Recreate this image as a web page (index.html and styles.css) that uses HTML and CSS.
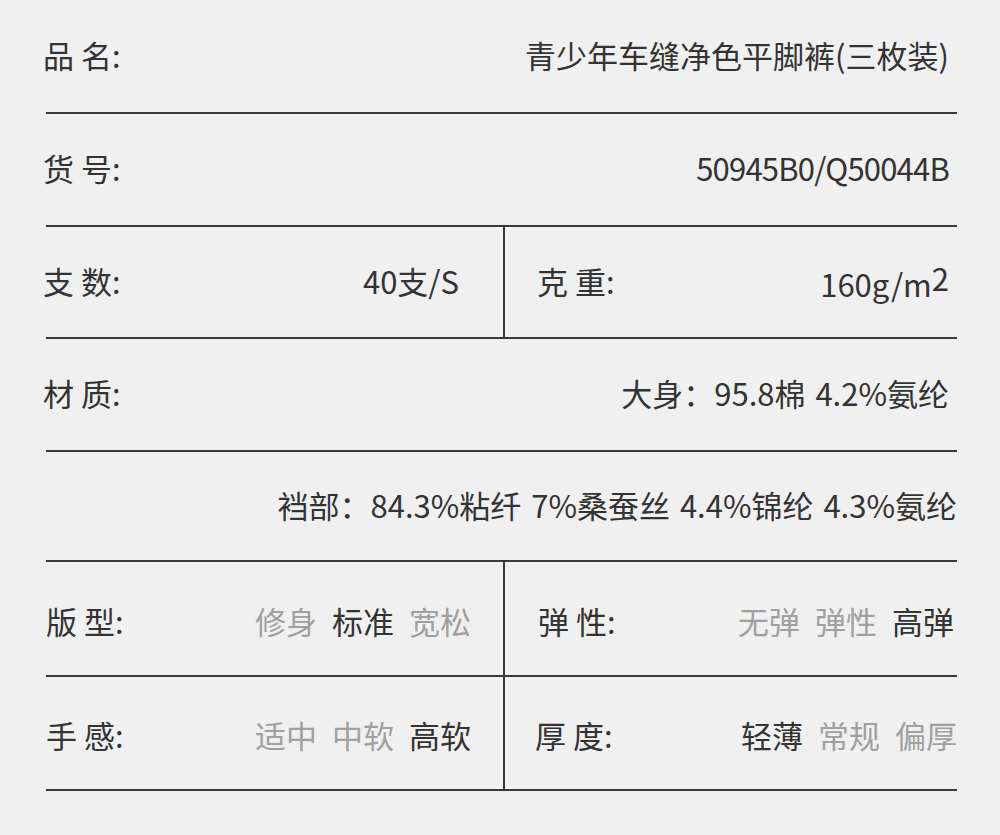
FILE: index.html
```html
<!DOCTYPE html>
<html lang="zh-CN">
<head>
<meta charset="utf-8">
<title>商品参数</title>
<link rel="stylesheet" href="styles.css">
</head>
<body>
<div class="spec">
  <div class="row r1">
    <div class="cell full">
      <span class="label">品 名:</span>
      <span class="value">青少年车缝净色平脚裤(三枚装)</span>
    </div>
  </div>
  <div class="row r2">
    <div class="cell full">
      <span class="label">货 号:</span>
      <span class="value code">50945B0/Q50044B</span>
    </div>
  </div>
  <div class="row r3 split">
    <div class="cell left">
      <span class="label">支 数:</span>
      <span class="value">40支/S</span>
    </div>
    <div class="cell right">
      <span class="label">克 重:</span>
      <span class="value">160g/m<span class="sup">2</span></span>
    </div>
  </div>
  <div class="row r4">
    <div class="cell full">
      <span class="label">材 质:</span>
      <span class="value spaced">大身：95.8棉 4.2%氨纶</span>
    </div>
  </div>
  <div class="row r5">
    <div class="cell full wide">
      <span class="value spaced">裆部：84.3%粘纤 7%桑蚕丝 4.4%锦纶 4.3%氨纶</span>
    </div>
  </div>
  <div class="row r6 split">
    <div class="cell left opts">
      <span class="label">版 型:</span>
      <span class="options"><span class="opt">修身</span><span class="opt on">标准</span><span class="opt">宽松</span></span>
    </div>
    <div class="cell right opts">
      <span class="label">弹 性:</span>
      <span class="options"><span class="opt">无弹</span><span class="opt">弹性</span><span class="opt on">高弹</span></span>
    </div>
  </div>
  <div class="row r7 split">
    <div class="cell left opts">
      <span class="label">手 感:</span>
      <span class="options"><span class="opt">适中</span><span class="opt">中软</span><span class="opt on">高软</span></span>
    </div>
    <div class="cell right opts last">
      <span class="label">厚 度:</span>
      <span class="options"><span class="opt on">轻薄</span><span class="opt">常规</span><span class="opt">偏厚</span></span>
    </div>
  </div>
</div>
</body>
</html>
```

FILE: styles.css
```css
html, body {
  margin: 0;
  padding: 0;
  background: #f0f0f0;
}

body {
  width: 1000px;
  height: 835px;
  font-family: "Noto Sans CJK SC", "Noto Sans", sans-serif;
  font-size: 31px;
  line-height: 1;
  color: #333333;
  font-weight: 400;
}

.spec {
  margin-left: 46px;
  width: 911px;
  display: flex;
  flex-direction: column;
}

.row {
  display: flex;
  border-bottom: 2px solid #3b3838;
  box-sizing: border-box;
}

.r1 { height: 114px; }
.r2 { height: 113px; }
.r3 { height: 112px; }
.r4 { height: 113px; }
.r5 { height: 110px; }
.r6 { height: 115px; }
.r7 { height: 114px; }

.cell {
  display: flex;
  align-items: center;
  justify-content: space-between;
  box-sizing: border-box;
  padding-bottom: 4px;
}

.full {
  flex: 1;
  padding-right: 8px;
  margin-left: -3px;
}

.wide {
  justify-content: flex-end;
  padding-right: 0;
}

.left {
  width: 462px;
  border-right: 2px solid #3b3838;
  padding-right: 44px;
  margin-left: -3px;
}

.right {
  flex: 1;
  padding-right: 8px;
  padding-left: 32px;
}

.opts { padding-top: 3px; padding-bottom: 0; }
.left.opts { padding-left: 3px; padding-right: 32px; }
.right.opts { padding-right: 3px; padding-left: 33px; }
.right.opts.last { padding-right: 0; padding-left: 30px; }

.label {
  white-space: pre;
}

.value {
  white-space: nowrap;
}

.code {
  letter-spacing: -0.8px;
}

.spaced {
  word-spacing: 3px;
}

.sup {
  font-size: 1em;
  vertical-align: 6px;
}

.options {
  display: flex;
  gap: 15px;
}

.opt {
  color: #a0a0a0;
}

.opt.on {
  color: #333333;
}
```
